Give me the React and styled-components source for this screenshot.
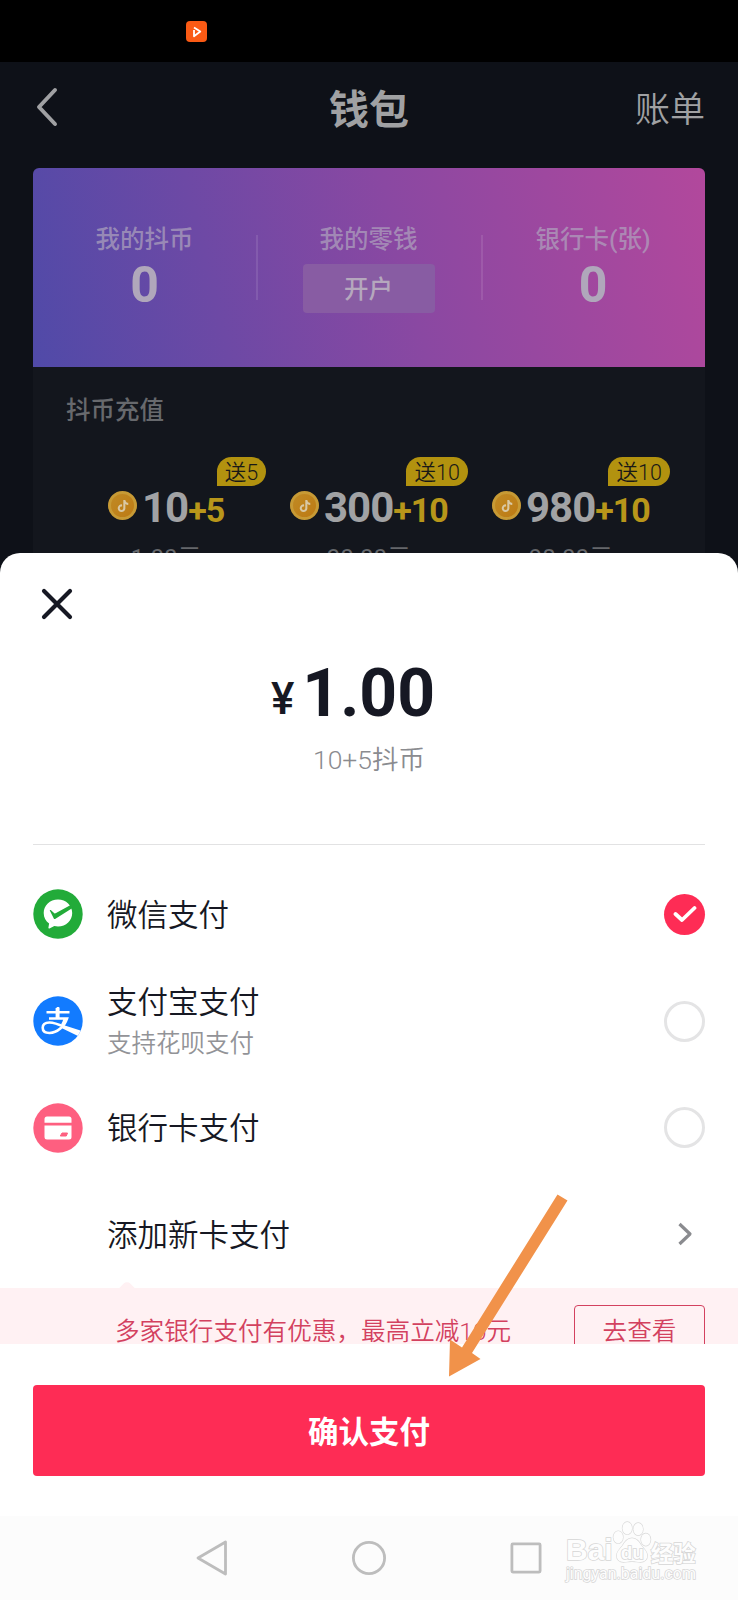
import styled, { createGlobalStyle } from "styled-components";
import { FaTiktok } from "react-icons/fa";

const balances = [
  { label: "我的抖币", value: "0" },
  { label: "我的零钱", action: "开户" },
  { label: "银行卡(张)", value: "0" },
];

const packs = [
  { amount: "10", bonus: "+5", tag: "送5", price: "1.00元", overhang: 42 },
  { amount: "300", bonus: "+10", tag: "送10", price: "30.00元", overhang: 20 },
  { amount: "980", bonus: "+10", tag: "送10", price: "98.00元", overhang: 20 },
];

const WechatIcon = () => (
  <svg width="50" height="50" viewBox="0 0 50 50">
    <circle cx="25" cy="25" r="24.700" fill="#22ab39" />
    <path
      d="M25 10.500C16.800 10.500 10.700 16.400 10.700 24c0 4.500 2 8 5.400 10.500l-.7 4.200c-.1.700.5 1 1.100.7l4.800-2.400c1.200.3 2.400.5 3.700.5 8.200 0 14.200-6 14.200-13.500S33.200 10.500 25 10.500z"
      fill="#fff"
    />
    <path
      d="M16.800 21.500l4 8c.3.500.8.700 1.300.4L39.500 19 37.200 16.300 22.600 24.300c-.5.200-.9.200-1.300-.1l-3.300-2.900c-.8-.5-1.500-.4-1.200.2z"
      fill="#22ab39"
    />
  </svg>
);

const AlipayIcon = () => (
  <svg width="50" height="50" viewBox="0 0 50 50">
    <clipPath id="alipay-disc">
      <circle cx="25" cy="25" r="24.700" />
    </clipPath>
    <circle cx="25" cy="25" r="24.700" fill="#127bff" />
    <g clipPath="url(#alipay-disc)">
      <path
        d="M13.500 16.300H36.500M25 11V22.500M16 22.500H34C31.500 30 24.500 37 16.500 37 12 37 9.700 34.800 9.700 31.800 9.700 28.300 12.500 26.500 16.500 26.500 22.500 26.500 28 29.500 33 31.800"
        fill="none"
        stroke="#fff"
        strokeWidth="2.600"
      />
      <path d="M24.500 12V22" stroke="#fff" strokeWidth="3.800" />
      <path d="M29.500 28.800L49 35 46 40.500 27.500 31.500z" fill="#fff" />
      <path d="M30.500 22.500h4c-1 3-2.400 5.500-4 7.500l-2.500-1.500c1.200-2 2-4 2.500-6z" fill="#fff" />
    </g>
  </svg>
);

const BankIcon = () => (
  <svg width="50" height="50" viewBox="0 0 50 50">
    <circle cx="25" cy="25" r="24.700" fill="#fe5f80" />
    <path d="M14 13.500h22a2.500 2.500 0 0 1 2.500 2.500v3.800h-27V16a2.500 2.500 0 0 1 2.500-2.500z" fill="#fff" />
    <path d="M11.500 22.500h27V34a2.500 2.500 0 0 1-2.500 2.500H14a2.500 2.500 0 0 1-2.500-2.500z" fill="#fff" />
    <path d="M29 30h5.500l-1.200 3h-6z" fill="#fe5f80" stroke="#fe5f80" strokeLinejoin="round" />
  </svg>
);

const methods = [
  { name: "微信支付", icon: <WechatIcon />, checked: true },
  { name: "支付宝支付", note: "支持花呗支付", icon: <AlipayIcon /> },
  { name: "银行卡支付", icon: <BankIcon /> },
];

const App = () => {
  return (
    <>
      <GlobalStyle />
      <Screen>
        <StatusBar>
          <svg width="21" height="21" viewBox="0 0 21 21">
            <rect width="21" height="21" rx="4" fill="#fa5a14" />
            <path d="M8 9v6.300l6.300-4.800-6.300-4" fill="none" stroke="#fff" strokeWidth="1.800" strokeLinejoin="round" />
          </svg>
        </StatusBar>
        <Wallet>
          <Header>
            <BackButton>
              <svg width="24" height="40" viewBox="0 0 24 40">
                <path d="M20 3L4 20l16 17" fill="none" stroke="#a0a1a3" strokeWidth="4" strokeLinecap="round" strokeLinejoin="round" />
              </svg>
            </BackButton>
            <Title>钱包</Title>
            <Bill>账单</Bill>
          </Header>
          <BalanceCard>
            {balances.map((item) => (
              <Balance key={item.label}>
                <BalanceLabel>{item.label}</BalanceLabel>
                {item.action ? <OpenButton>{item.action}</OpenButton> : <BalanceValue>{item.value}</BalanceValue>}
              </Balance>
            ))}
          </BalanceCard>
          <Recharge>
            <RechargeTitle>抖币充值</RechargeTitle>
            <Packs>
              {packs.map((pack) => (
                <Pack key={pack.amount}>
                  <Tag $overhang={pack.overhang}>{pack.tag}</Tag>
                  <Amount>
                    <Coin>
                      <FaTiktok size={12} />
                    </Coin>
                    {pack.amount}
                    <Bonus>{pack.bonus}</Bonus>
                  </Amount>
                  <PackPrice>{pack.price}</PackPrice>
                </Pack>
              ))}
            </Packs>
          </Recharge>
        </Wallet>
        <Sheet>
          <CloseButton>
            <svg width="34" height="34" viewBox="0 0 34 34">
              <path d="M4 4l26 26M30 4L4 30" stroke="#161823" strokeWidth="4.200" strokeLinecap="round" />
            </svg>
          </CloseButton>
          <Price>
            <Currency>¥</Currency>1.00
          </Price>
          <PriceNote>10+5抖币</PriceNote>
          <Methods>
            {methods.map((method) => (
              <Method key={method.name}>
                <MethodIcon>{method.icon}</MethodIcon>
                <MethodText>
                  {method.name}
                  {method.note && <MethodNote>{method.note}</MethodNote>}
                </MethodText>
                <Radio $checked={method.checked}>
                  {method.checked && (
                    <svg width="24" height="18" viewBox="0 0 24 18">
                      <path d="M2.500 9l6.500 6L21.500 3" fill="none" stroke="#fff" strokeWidth="3.800" strokeLinecap="round" strokeLinejoin="round" />
                    </svg>
                  )}
                </Radio>
              </Method>
            ))}
            <Method>
              <MethodIcon />
              <MethodText>添加新卡支付</MethodText>
              <ArrowBox>
                <svg width="16" height="26" viewBox="0 0 16 26">
                  <path d="M2.500 3L13 13 2.500 23" fill="none" stroke="#8a8b8f" strokeWidth="3.200" strokeLinejoin="round" />
                </svg>
              </ArrowBox>
            </Method>
          </Methods>
          <Promo>
            <PromoText>多家银行支付有优惠，最高立减10元</PromoText>
            <PromoButton>去查看</PromoButton>
          </Promo>
          <Confirm>确认支付</Confirm>
        </Sheet>
        <NavBar>
          <svg width="34" height="40" viewBox="0 0 34 40">
            <path d="M30.500 4v32L3 20z" fill="none" stroke="#bdbdbd" strokeWidth="2.800" strokeLinejoin="round" />
          </svg>
          <svg width="36" height="36" viewBox="0 0 36 36">
            <circle cx="18" cy="18" r="15.600" fill="none" stroke="#bdbdbd" strokeWidth="2.800" />
          </svg>
          <svg width="32" height="32" viewBox="0 0 32 32">
            <rect x="1.900" y="1.900" width="28.200" height="28.200" rx="1" fill="none" stroke="#bdbdbd" strokeWidth="2.800" />
          </svg>
        </NavBar>
        <Watermark>
          <Brand>
            Bai
            <Paw>
              <svg width="40" height="44" viewBox="0 0 42 44">
                <g fill="#fdfdfd" stroke="#d9d9d9" strokeWidth="1.400">
                  <ellipse cx="6.500" cy="17" rx="5" ry="6.500" />
                  <ellipse cx="16" cy="7.500" rx="5" ry="6.500" />
                  <ellipse cx="27.500" cy="8.500" rx="5" ry="6.500" />
                  <ellipse cx="35.500" cy="19.500" rx="5" ry="6.500" />
                  <path d="M21 18c-5 0-7.500 4-10 8-3 4-6 6-6 10.500 0 4 3 6.500 7 6.500 3 0 6-.8 9-.8s6 .8 9 .8c4 0 7-2.500 7-6.500 0-4.500-3-6.500-6-10.500-2.500-4-5-8-10-8z" />
                </g>
              </svg>
              <PawText>du</PawText>
            </Paw>
            <BrandCn>经验</BrandCn>
          </Brand>
          <Site>jingyan.baidu.com</Site>
        </Watermark>
        <Pointer width="122" height="186" viewBox="0 0 122 186">
          <path d="M111.500 3.500L121.500 9.500 26 162 34.500 168 3 185.500 4 148.500 16 156.500z" fill="#f1924a" />
        </Pointer>
      </Screen>
    </>
  );
};

const GlobalStyle = createGlobalStyle`
  * {
    box-sizing: border-box;
  }
  body {
    margin: 0;
    font-family: Roboto, "Noto Sans CJK SC", sans-serif;
  }
  svg {
    display: block;
    flex-shrink: 0;
  }
`;

const Screen = styled.div`
  position: relative;
  display: flex;
  flex-direction: column;
  width: 738px;
  height: 1600px;
  overflow: hidden;
  background: #0e1118;
`;

const StatusBar = styled.div`
  height: 62px;
  flex-shrink: 0;
  padding: 21px 186px;
  background: #000;
`;

const Wallet = styled.div`
  height: 491px;
  flex-shrink: 0;
  padding: 0 33px;
  overflow: hidden;
`;

const Header = styled.div`
  display: grid;
  grid-template-columns: 1fr auto 1fr;
  align-items: center;
  height: 89px;
  margin-bottom: 17px;
  color: #a0a1a3;
`;

const BackButton = styled.button`
  padding: 0 0 0 2px;
  border: none;
  background: none;
`;

const Title = styled.h1`
  margin: 0;
  font-size: 40px;
  font-weight: 700;
`;

const Bill = styled.span`
  font-size: 35px;
  font-weight: 350;
  text-align: right;
`;

const BalanceCard = styled.div`
  display: grid;
  grid-template-columns: 223px 225px 1fr;
  height: 199px;
  border-radius: 6px 6px 0 0;
  background: linear-gradient(76deg, #504aa8 0%, #8a48a2 55%, #b2489c 100%);
`;

const Balance = styled.div`
  position: relative;
  display: flex;
  flex-direction: column;
  align-items: center;
  padding-top: 58px;

  & + &::before {
    content: "";
    position: absolute;
    left: 0;
    top: 67px;
    width: 2px;
    height: 65px;
    background: rgba(255, 255, 255, 0.1);
  }
`;

const BalanceLabel = styled.span`
  font-size: 24.500px;
  font-weight: 500;
  line-height: 28px;
  color: rgba(176, 166, 190, 0.7);
`;

const BalanceValue = styled.span`
  margin-top: 2px;
  font-size: 50px;
  font-weight: 700;
  line-height: 59px;
  color: #b0a7bb;
`;

const OpenButton = styled.button`
  width: 132px;
  height: 49px;
  margin-top: 10px;
  padding: 0 0 2px;
  border: none;
  border-radius: 4px;
  background: #885ca3;
  color: #b5a8bd;
  font-family: inherit;
  font-size: 24.500px;
  font-weight: 500;
`;

const Recharge = styled.div`
  height: 190px;
  padding-top: 30px;
  background: #13161d;
`;

const RechargeTitle = styled.h2`
  margin: 0 0 32px 33px;
  color: #67696d;
  font-size: 24.500px;
  font-weight: 500;
  line-height: 28px;
`;

const Packs = styled.div`
  display: grid;
  grid-template-columns: 182px 202px 202px;
  padding-left: 75px;
`;

const Pack = styled.div`
  display: flex;
  flex-direction: column;
  width: max-content;
`;

const Tag = styled.span`
  align-self: flex-end;
  height: 29px;
  margin-right: ${(props) => -props.$overhang}px;
  padding: 0 8px;
  border-radius: 15px 15px 15px 0;
  background: #b2920f;
  color: #191917;
  font-size: 21.500px;
  font-weight: 350;
  line-height: 31px;
`;

const Amount = styled.div`
  display: flex;
  align-items: baseline;
  height: 50px;
  color: #a1a2a4;
  font-size: 42px;
  font-weight: 700;
  line-height: 44px;
  letter-spacing: -1px;
`;

const Coin = styled.span`
  display: flex;
  align-items: center;
  justify-content: center;
  align-self: flex-start;
  width: 29px;
  height: 29px;
  margin: 5px 5px 0 0;
  border: 3px solid #c79a35;
  border-radius: 50%;
  background: linear-gradient(135deg, #c08a24, #bd7a14);
  color: #d9c8a4;
`;

const Bonus = styled.span`
  color: #b8961a;
  font-size: 34px;
`;

const PackPrice = styled.span`
  align-self: center;
  margin: 8px 0 0;
  color: #65676b;
  font-size: 24px;
  font-weight: 400;
  line-height: 28px;
`;

const Sheet = styled.div`
  display: flex;
  flex-direction: column;
  height: 963px;
  flex-shrink: 0;
  border-radius: 20px 20px 0 0;
  background: #fff;
  color: #161823;
`;

const CloseButton = styled.button`
  width: 34px;
  margin: 34px 0 0 40px;
  padding: 0;
  border: none;
  background: none;
`;

const Price = styled.div`
  display: flex;
  align-items: baseline;
  justify-content: center;
  height: 76px;
  margin-top: 35px;
  padding-right: 32px;
  font-size: 66px;
  font-weight: 700;
  line-height: 76px;
`;

const Currency = styled.span`
  position: relative;
  top: -2px;
  margin-right: 8px;
  font-size: 44px;
  font-weight: 500;
`;

const PriceNote = styled.div`
  height: 30px;
  margin-top: 13px;
  color: #8a8b8f;
  font-size: 26.500px;
  font-weight: 350;
  line-height: 30px;
  text-align: center;
`;

const Methods = styled.div`
  height: 444px;
  margin: 69px 33px 0;
  padding-top: 16px;
  border-top: 1px solid #e2e2e3;
`;

const Method = styled.div`
  display: flex;
  align-items: center;
  height: 106.700px;
`;

const MethodIcon = styled.div`
  display: flex;
  align-items: center;
  width: 49px;
  flex-shrink: 0;
  margin-right: 25px;
`;

const MethodText = styled.div`
  flex: 1;
  padding-top: 3px;
  font-size: 30.500px;
  font-weight: 350;
  line-height: 40px;
`;

const MethodNote = styled.div`
  margin-top: 2px;
  color: #929397;
  font-size: 24.500px;
  line-height: 38px;
`;

const Radio = styled.span`
  display: flex;
  align-items: center;
  justify-content: center;
  width: 41px;
  height: 41px;
  border: ${(props) => (props.$checked ? "none" : "3px solid #e4e4e5")};
  border-radius: 50%;
  background: ${(props) => (props.$checked ? "#fe2c55" : "#fff")};
`;

const ArrowBox = styled.span`
  width: 28px;
`;

const Promo = styled.div`
  position: relative;
  display: flex;
  align-items: flex-start;
  justify-content: space-between;
  height: 56px;
  padding: 17px 33px 0 115px;
  background: #fff1f3;
  clip-path: inset(-8px 0 0 0);
  color: #d3415f;
  font-size: 24.600px;
  font-weight: 350;

  &::before {
    content: "";
    position: absolute;
    left: 118px;
    top: -4px;
    width: 18px;
    height: 18px;
    border-radius: 5px;
    background: #fff1f3;
    transform: rotate(45deg);
  }
`;

const PromoText = styled.span`
  position: relative;
  margin-top: 9px;
  line-height: 36px;
  white-space: nowrap;
`;

const PromoButton = styled.span`
  width: 131px;
  height: 52px;
  flex-shrink: 0;
  border: 1.500px solid #d3415f;
  border-radius: 4px;
  line-height: 52px;
  text-align: center;
`;

const Confirm = styled.button`
  height: 91px;
  margin: 41px 33px 0;
  padding: 0 0 2px;
  border: none;
  border-radius: 4px;
  background: #fe2c55;
  color: #fff;
  font-family: inherit;
  font-size: 30.500px;
  font-weight: 700;
`;

const NavBar = styled.div`
  display: grid;
  grid-template-columns: repeat(3, 157px);
  flex: 1;
  align-items: center;
  justify-content: center;
  justify-items: center;
  background: #fcfcfc;
`;

const Watermark = styled.div`
  position: absolute;
  left: 566px;
  top: 1519px;
  width: 140px;
  color: #fdfdfd;
  -webkit-text-stroke: 1.500px #d6d6d6;
  paint-order: stroke fill;
`;

const Brand = styled.div`
  display: flex;
  align-items: flex-end;
  height: 45px;
  font-family: "Liberation Sans", sans-serif;
  font-size: 30px;
  font-weight: 700;
  line-height: 28px;
`;

const Paw = styled.span`
  position: relative;
  margin: 0 -1px;
`;

const PawText = styled.span`
  position: absolute;
  left: 9px;
  bottom: 0;
  font-size: 19px;
  line-height: 22px;
`;

const BrandCn = styled.span`
  font-family: "Noto Sans CJK SC", sans-serif;
  font-size: 22.500px;
  line-height: 24px;
`;

const Site = styled.div`
  font-size: 16px;
  line-height: 20px;
`;

const Pointer = styled.svg`
  position: absolute;
  left: 446px;
  top: 1191px;
`;

export default App;
